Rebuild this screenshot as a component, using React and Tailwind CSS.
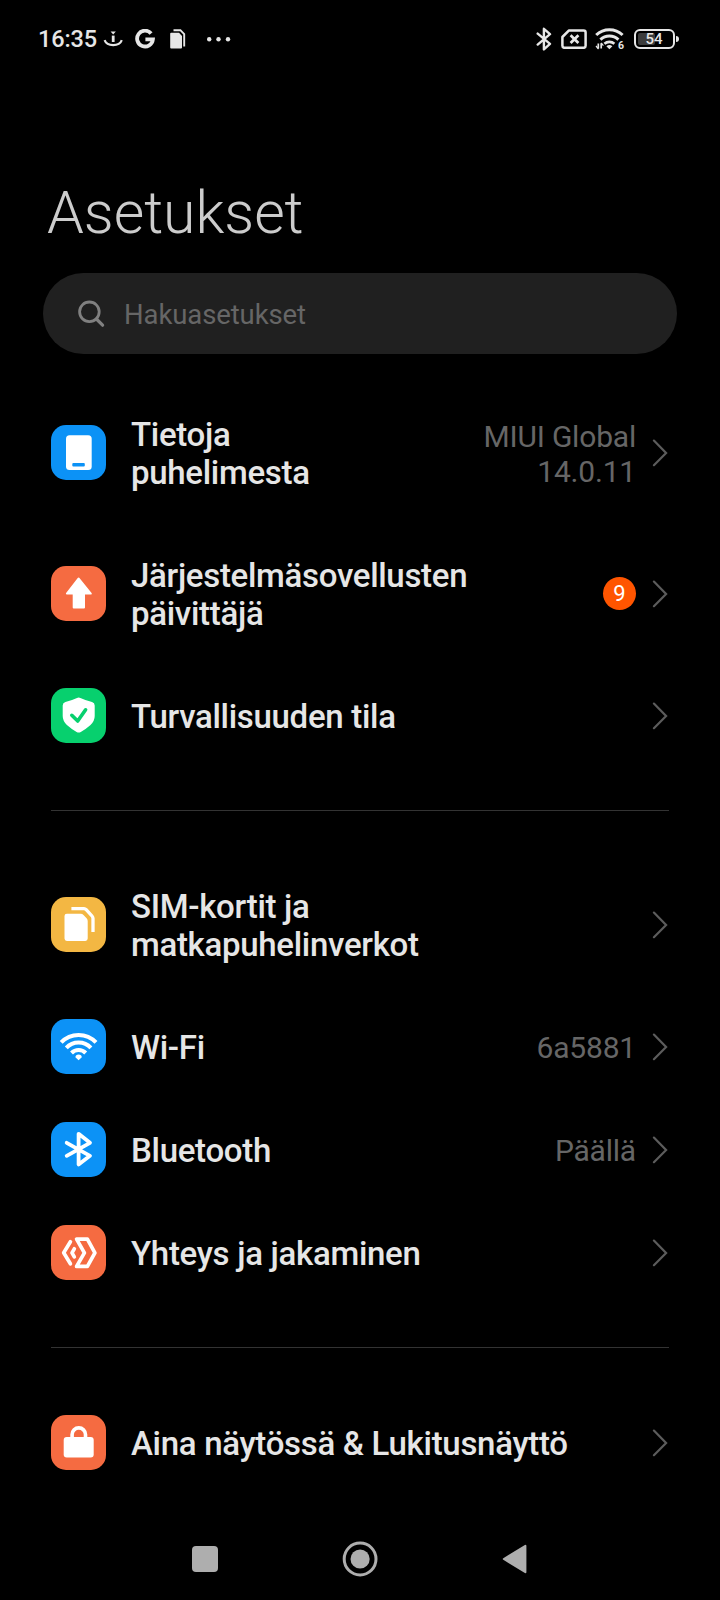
const tiles = {
  phone: {
    bg: 'bg-[#0c92f6]',
    art: (
      <>
        <rect x="15" y="10.3" width="25.7" height="34.7" rx="3.5" fill="#fff" />
        <rect x="21.3" y="38" width="12.5" height="3.6" rx="1" fill="#0c92f6" />
      </>
    ),
  },
  update: {
    bg: 'bg-[#f56b41]',
    art: (
      <path
        d="M27.5 12.5 L39.8 27.6 H33 V41.5 H22.7 V27.6 H15.9 Z"
        fill="#fff"
        stroke="#fff"
        strokeWidth="2"
        strokeLinejoin="round"
      />
    ),
  },
  security: {
    bg: 'bg-[#07d06e]',
    art: (
      <>
        <path
          d="M26 10 Q27.7 9 29.4 10 Q34.5 12.4 41 14 Q43.7 14.8 43.7 17.6 V28 Q43.7 33 39.5 37 Q35 41 29.8 44 Q27.7 45.2 25.6 44 Q20.4 41 15.9 37 Q11.7 33 11.7 28 V17.6 Q11.7 14.8 14.4 14 Q20.9 12.4 26 10 Z"
          fill="#fff"
        />
        <path d="M20.8 27.3 L26.7 33 L34.6 21.8" fill="none" stroke="#07d06e" strokeWidth="3.6" strokeLinecap="round" strokeLinejoin="round" />
      </>
    ),
  },
  sim: {
    bg: 'bg-[#f3b743]',
    art: (
      <>
        <path
          d="M15.9 16.7 H29.6 Q31.4 16.7 32.5 17.9 L35.6 21.2 Q36.7 22.4 36.7 24 V41.6 Q36.7 44 34.3 44 H15.9 Q13.5 44 13.5 41.6 V19.1 Q13.5 16.7 15.9 16.7 Z"
          fill="#fff"
        />
        <path d="M20.4 11.6 H33 Q34.3 11.6 35.2 12.6 L41 19 Q42 20.1 42 21.5 V35" fill="none" stroke="#fff" strokeWidth="3.3" />
      </>
    ),
  },
  wifi: {
    bg: 'bg-[#0c92f6]',
    art: (
      <>
        <g fill="none" stroke="#fff" strokeWidth="4">
          <path d="M10.2 23.4 A24 24 0 0 1 45 23.4" />
          <path d="M15.3 28.8 A16.8 16.8 0 0 1 39.9 28.8" />
          <path d="M20.5 34 A9.8 9.8 0 0 1 34.7 34" />
        </g>
        <path d="M27.6 41.2 L24.4 38.2 Q24.6 35.7 27.6 35.6 Q30.6 35.7 30.8 38.2 Z" fill="#fff" />
      </>
    ),
  },
  bluetooth: {
    bg: 'bg-[#0c92f6]',
    art: (
      <path
        d="M15.7 20.8 L39 33.8 L27.6 42.4 V11.8 L39 20.8 L15.7 33.8"
        fill="none"
        stroke="#fff"
        strokeWidth="3.8"
        strokeLinecap="round"
        strokeLinejoin="round"
      />
    ),
  },
  share: {
    bg: 'bg-[#f56b41]',
    art: (
      <g fill="none" stroke="#fff" strokeWidth="3.7" strokeLinecap="round" strokeLinejoin="round">
        <path d="M19.4 16.8 L12.7 27.8 L19.4 38.8" />
        <path d="M23.3 23.8 L21 27.8 L23.3 31.8" />
        <path d="M25.6 14.2 H36.4 L43.9 27.8 L36.4 41.4 H25.6 L33.4 27.8 Z" />
      </g>
    ),
  },
  lock: {
    bg: 'bg-[#f56b41]',
    art: (
      <>
        <rect x="12.7" y="22" width="30" height="20.6" rx="3" fill="#fff" />
        <path d="M21.1 24 V19.6 A6.7 6.7 0 0 1 34.5 19.6 V24" fill="none" stroke="#fff" strokeWidth="3.6" />
      </>
    ),
  },
}

const groups = [
  [
    { icon: 'phone', lines: ['Tietoja', 'puhelimesta'], value: ['MIUI Global', '14.0.11'] },
    { icon: 'update', lines: ['Järjestelmäsovellusten', 'päivittäjä'], badge: '9' },
    { icon: 'security', lines: ['Turvallisuuden tila'] },
  ],
  [
    { icon: 'sim', lines: ['SIM-kortit ja', 'matkapuhelinverkot'] },
    { icon: 'wifi', lines: ['Wi-Fi'], value: ['6a5881'] },
    { icon: 'bluetooth', lines: ['Bluetooth'], value: ['Päällä'] },
    { icon: 'share', lines: ['Yhteys ja jakaminen'] },
  ],
  [{ icon: 'lock', lines: ['Aina näytössä & Lukitusnäyttö'] }],
]

function Row({ icon, lines, value, badge }) {
  const tile = tiles[icon]
  return (
    <li className={`flex items-center ${lines.length > 1 ? 'h-[141px]' : 'h-[103px]'}`}>
      <span className={`size-[55px] shrink-0 rounded-[15px] ${tile.bg}`}>
        <svg viewBox="0 0 55 55" className="size-full">
          {tile.art}
        </svg>
      </span>
      <span className="ml-[25px] flex-1 pt-[3px] text-[33px] leading-[38px] font-medium tracking-[-0.3px] whitespace-nowrap text-[#e6e6e6]">
        {lines.map((line) => (
          <span key={line} className="block">
            {line}
          </span>
        ))}
      </span>
      {value && (
        <span className="pt-[2px] text-right text-[30px] leading-[35px] tracking-[-0.2px] text-[#666666]">
          {value.map((line) => (
            <span key={line} className="block">
              {line}
            </span>
          ))}
        </span>
      )}
      {badge && (
        <span className="flex size-[33px] items-center justify-center rounded-full bg-[#ff5500] pt-px text-[22px] leading-none text-white">
          {badge}
        </span>
      )}
      <svg viewBox="0 0 16 28" className="mr-px ml-[16px] h-[28px] w-[16px] shrink-0" fill="none" stroke="#5c5c5c" strokeWidth="2.2">
        <path d="M1.9 1.6 L14.1 14 L1.9 26.2" strokeLinecap="round" />
      </svg>
    </li>
  )
}

function StatusBar() {
  return (
    <header className="flex h-[77px] items-center justify-between pr-[41px] pl-[38px] text-[#e6e6e6]">
      <div className="flex items-center">
        <span className="w-[65px] pt-[2px] text-[23.5px] leading-none font-medium tracking-[-0.1px]">16:35</span>
        <svg viewBox="0 0 20 20" className="h-5 w-5" fill="none" stroke="currentColor">
          <path d="M1.6 11.2 Q3.5 16.2 10.2 16.2 Q16.9 16.2 18.8 11.2" strokeWidth="2.2" />
          <path d="M10.2 6.6 V13" strokeWidth="2.8" />
          <path d="M7.6 2.6 H12.8 L10.2 5.4 Z" fill="currentColor" stroke="none" />
        </svg>
        <svg viewBox="0 0 20 20" className="ml-[12px] h-5 w-5" fill="none" stroke="currentColor" strokeWidth="3.8">
          <path d="M16.1 4.5 A7.9 7.9 0 1 0 17.9 10.4 H10.4" />
        </svg>
        <svg viewBox="0 0 16 20" className="ml-[15px] h-5 w-4">
          <path d="M1.2 3.8 H9 L12 7 V18.4 Q12 19.4 11 19.4 H1.2 Q0.2 19.4 0.2 18.4 V4.8 Q0.2 3.8 1.2 3.8 Z" fill="currentColor" />
          <path d="M3.5 1.2 H10.4 L14.2 5.2 V17.4" fill="none" stroke="currentColor" strokeWidth="1.9" />
        </svg>
        <svg viewBox="0 0 26 6" className="ml-[20px] h-[6px] w-[26px]" fill="currentColor">
          <circle cx="3.2" cy="3.3" r="2.2" />
          <circle cx="12.5" cy="3.3" r="2.2" />
          <circle cx="22" cy="3.3" r="2.2" />
        </svg>
      </div>
      <div className="flex items-center">
        <svg viewBox="0 0 16 24" className="h-6 w-4" fill="none" stroke="currentColor" strokeWidth="2.4" strokeLinejoin="round" strokeLinecap="round">
          <path d="M1.7 6.6 L14 16.8 L7.9 22.4 V1.8 L14 7.2 L1.7 17.6" />
        </svg>
        <svg viewBox="0 0 26 20" className="ml-[9px] h-5 w-[26px]" fill="none" stroke="currentColor" strokeWidth="2.5">
          <path d="M8 1.4 H22.6 Q24.6 1.4 24.6 3.4 V16.8 Q24.6 18.8 22.6 18.8 H3.4 Q1.4 18.8 1.4 16.8 V8 Z" strokeLinejoin="round" />
          <path d="M9.6 6.2 L17.4 14 M17.4 6.2 L9.6 14" strokeWidth="2.7" />
        </svg>
        <svg viewBox="0 0 30 23" className="ml-[8px] h-[23px] w-[30px] overflow-visible" fill="none" stroke="currentColor" strokeWidth="3">
          <path d="M1.2 8 A19 19 0 0 1 27.6 8" />
          <path d="M5.4 12.6 A13.2 13.2 0 0 1 23.4 12.6" />
          <path d="M9.4 16.8 A7.6 7.6 0 0 1 19.4 16.8" strokeWidth="2.6" />
          <path d="M14.4 22.2 L11.4 19.2 Q14.4 16.8 17.4 19.2 Z" fill="currentColor" stroke="none" />
          <path d="M3.3 16.6 V21.6 M6.2 16.2 V21.4" strokeWidth="1.7" />
          <path d="M1 19 L3.5 22 M8.4 18.6 L6.2 16" strokeWidth="1.2" />
          <text x="23" y="22" fontSize="10.5" fontWeight="700" fill="currentColor" stroke="none">
            6
          </text>
        </svg>
        <div className="ml-[9px] flex h-[20px] w-[41px] items-center rounded-[6px] border-2 border-current p-[2px]">
          <div className="h-full w-[17px] rounded-[2px] bg-[#3c3c3c]">
            <span className="flex h-full w-[32px] items-center justify-center pt-[2px] text-[15px] leading-none font-medium">54</span>
          </div>
        </div>
        <div className="ml-px h-[6px] w-[3px] rounded-r-sm bg-current" />
      </div>
    </header>
  )
}

export default function App() {
  return (
    <div className="flex h-[1600px] w-[720px] flex-col overflow-hidden bg-black font-['Roboto',sans-serif]">
      <StatusBar />
      <h1 className="mt-[101px] pl-[47px] text-[59px] leading-[70px] font-light tracking-[-0.05px] text-[#cccccc]">Asetukset</h1>
      <div className="mt-[25px] mr-[43px] ml-[43px] flex h-[81px] shrink-0 items-center rounded-full bg-[#202020] pl-[34px] text-[27.5px] text-[#666666]">
        <svg viewBox="0 0 28 28" className="size-7" fill="none" stroke="#808080" strokeWidth="2.8">
          <circle cx="12.4" cy="11.8" r="9.8" />
          <path d="M19.4 19 L25.6 25.2" strokeWidth="3.2" strokeLinecap="round" />
        </svg>
        <span className="ml-[19px] pt-[3px] tracking-[-0.1px]">Hakuasetukset</span>
      </div>
      <main className="mt-[28px] flex flex-1 flex-col pr-[51px] pl-[51px]">
        {groups.map((rows, i) => (
          <section key={rows[0].icon}>
            {i > 0 && <hr className="mt-[43px] mb-[43px] border-t border-[#333333]" />}
            <ul>
              {rows.map((row) => (
                <Row key={row.icon} {...row} />
              ))}
            </ul>
          </section>
        ))}
      </main>
      <nav className="flex h-[83px] shrink-0 items-center justify-center gap-[124px] pr-px text-[#aeaeae]">
        <div className="size-[26px] rounded-[4px] bg-current" />
        <svg viewBox="0 0 36 36" className="size-9">
          <circle cx="18.1" cy="18" r="15.9" fill="none" stroke="currentColor" strokeWidth="3" />
          <circle cx="18.1" cy="18" r="9.6" fill="currentColor" />
        </svg>
        <svg viewBox="0 0 26 30" className="h-[30px] w-[26px]">
          <path d="M23.4 1.8 V28.2 L1.8 15 Z" fill="currentColor" stroke="currentColor" strokeWidth="2" strokeLinejoin="round" />
        </svg>
      </nav>
    </div>
  )
}
